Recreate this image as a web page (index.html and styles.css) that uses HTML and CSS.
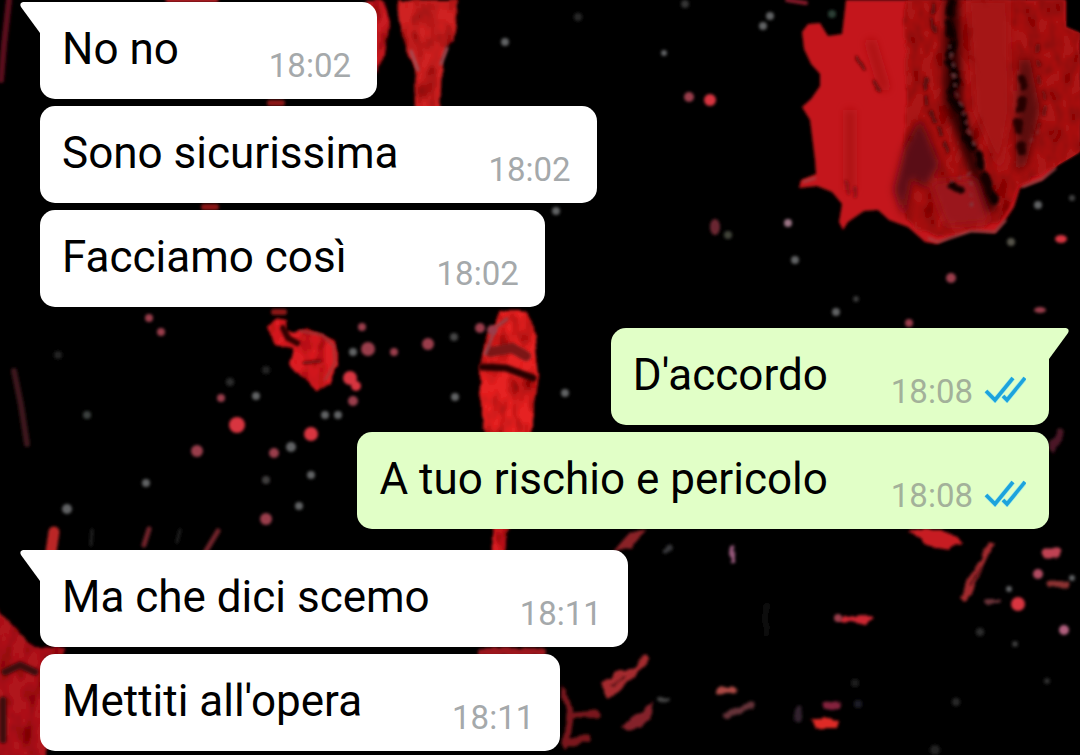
FILE: index.html
```html
<!DOCTYPE html>
<html lang="it">
  <head>
    <meta charset="UTF-8" />
    <meta name="viewport" content="width=device-width, initial-scale=1.0" />
    <title>Chat</title>
    <link rel="stylesheet" href="styles.css">
  </head>
  <body>
    <svg class="wallpaper" viewBox="0 0 1080 755" preserveAspectRatio="xMidYMid slice" aria-hidden="true">
      <defs>
        <filter id="soft" x="-20%" y="-20%" width="140%" height="140%">
          <feGaussianBlur stdDeviation="1.8"/>
        </filter>
        <filter id="smear" x="-40%" y="-20%" width="180%" height="140%">
          <feGaussianBlur stdDeviation="4"/>
        </filter>
        <filter id="streak" x="-10%" y="-10%" width="120%" height="120%">
          <feTurbulence type="fractalNoise" baseFrequency="0.08" numOctaves="2" seed="9" result="noise"/>
          <feDisplacementMap in="SourceGraphic" in2="noise" scale="7" xChannelSelector="R" yChannelSelector="G" result="rough"/>
          <feGaussianBlur in="rough" stdDeviation="1.6"/>
        </filter>
        <filter id="paint" x="-5%" y="-5%" width="110%" height="110%">
          <feTurbulence type="fractalNoise" baseFrequency="0.08 0.04" numOctaves="3" seed="4" result="noise"/>
          <feDisplacementMap in="SourceGraphic" in2="noise" scale="8" xChannelSelector="R" yChannelSelector="G" result="rough"/>
          <feColorMatrix in="noise" type="matrix" values="0 0 0 0 0.15  0 0 0 0 0  0 0 0 0 0  0 1.8 0 0 -0.72" result="dark"/>
          <feComposite in="dark" in2="rough" operator="in" result="grain"/>
          <feMerge result="painted">
            <feMergeNode in="rough"/>
            <feMergeNode in="grain"/>
          </feMerge>
          <feGaussianBlur in="painted" stdDeviation="1.6"/>
        </filter>
        <clipPath id="splashClip">
          <path id="splash" d="M846 0 L842 34 L828 36 L820 23 L808 24 L802 32 L804 49 L811 64 L820 74 L820 86 L811 99 L802 107 L810 120 L815 160 L816 174 L801 180 L799 188 L817 186 L832 192 L842 204 L839 222 L843 230 L848 222 L864 211 L878 210 L889 220 L908 227 L925 242 L937 244 L950 238 L971 231 L995 233 L1004 222 L1014 207 L1020 188 L1042 180 L1058 165 L1080 152 L1080 33 L1066 27 L1066 0 Z"/>
        </clipPath>
      </defs>

      <!-- big splash, top right -->
      <use href="#splash" fill="#c4161a" filter="url(#soft)"/>
      <g clip-path="url(#splashClip)">
        <path d="M905 0 H1066 V28 L1080 34 V152 L1058 164 L1020 186 L1002 222 L937 238 L905 220 Z" fill="#ab1519" filter="url(#paint)"/>
        <g filter="url(#smear)">
          <path d="M946 -10 H959 L961 100 L980 165 L998 210 L984 214 L965 160 L944 100Z" fill="#2a0405"/>
          <path d="M920 118 L940 165 L925 188 L912 177 L904 218 L894 190 L904 150Z" fill="#5a0d16"/>
          <path d="M1019 60 H1030 L1040 110 L1026 165 L1016 172 L1016 120Z" fill="#5b0d0e"/>
          <path d="M930 182 L975 178 L990 222 L946 226Z" fill="#9a181b"/>
          <path d="M968 0 H1008 L1010 110 L1000 170 L975 110Z" fill="#a51418"/>
          <path d="M850 110 V190 M870 40 L885 90" stroke="#a81216" stroke-width="8"/>
        </g>
        <g filter="url(#streak)" fill="none" stroke-linecap="round">
          <path d="M952 2 L948 22 L954 42 L947 60 L957 78 L950 98 L963 113 L966 137 L979 158 L988 184 L994 200" stroke="#090001" stroke-width="8" stroke-dasharray="12 9"/>
          <path d="M932 5 L934 30 M925 80 L927 106 L940 130 L948 153" stroke="#5a0b0d" stroke-width="4" stroke-dasharray="9 8"/>
          <path d="M1021 78 L1025 91 L1018 122 L1022 151" stroke="#250304" stroke-width="8" stroke-dasharray="9 14"/>
          <path d="M1037 45 L1039 75 L1045 105 L1038 130" stroke="#6d0e10" stroke-width="4" stroke-dasharray="5 11"/>
          <path d="M858 57 L864 69 M874 82 L880 92" stroke="#6a0c0e" stroke-width="3"/>
          <path d="M950 45 L955 86 L965 116 L975 145 M1030 140 L1040 133 M950 182 L970 174 L972 205" stroke="#7b4146" stroke-width="2" stroke-dasharray="2 8"/>
          <path d="M983 178 L990 192 M952 185 L960 190" stroke="#130203" stroke-width="8"/>
          <path d="M847 184 V192 M855 188 V196" stroke="#8b1013" stroke-width="4"/>
        </g>
      </g>
      <path d="M928 238 L938 242 L950 238 L971 231 L995 232 L1006 220 M1022 187 L1042 179 L1056 168 M803 182 L816 178" fill="none" stroke="#a0484c" stroke-width="2" filter="url(#soft)"/>

      <!-- drips -->
      <g filter="url(#paint)">
        <path d="M398 0 H458 L454 32 L443 62 L441 112 H415 L414 66 L401 32Z" fill="#cf2024"/>
        <path d="M366 0 H384 L390 22 L385 54 L376 75Z" fill="#c91a20"/>
        <path d="M502 310 H524 L534 328 L539 375 L534 410 L528 440 H486 L482 405 L480 374 L487 335Z" fill="#e62124"/>
        <path d="M493 525 H510 L504 558 H490Z" fill="#d81f24"/>
        <path d="M267 327 L275 318 L287 320 L284 332 L299 330 L317 331 L335 342 L339 362 L330 383 L317 391 L305 381 L289 363 L293 348 L274 345Z" fill="#dc1f22"/>
        <path d="M-8 604 L17 630 L34 647 L66 648 L62 658 H46 V765 H-8Z" fill="#b0171b"/>
      </g>
      <g filter="url(#soft)" fill="none" stroke-linecap="round">
        <path d="M482 367 L506 368 L533 378" stroke="#250506" stroke-width="7"/>
        <path d="M490 352 L512 348 L526 356" stroke="#7c1316" stroke-width="10"/>
        <path d="M485 354 L496 327 L507 319" stroke="#93444b" stroke-width="3"/>
        <path d="M411 51 L418 70 M447 48 L441 64" stroke="#a25159" stroke-width="3"/>
        <path d="M283 328 L288 338 L297 343" stroke="#330505" stroke-width="6"/>
        <path d="M304 363 L320 361" stroke="#6b0d0e" stroke-width="3"/>
        <path d="M300 331 L322 335 L334 346 L335 363 L325 380" stroke="#9b3a39" stroke-width="2"/>
        <path d="M9 0 L4 45 L1 80" stroke="#5c101a" stroke-width="6"/>
        <path d="M14 371 L21 405 L27 444" stroke="#3d131d" stroke-width="6"/>
        <path d="M5 672 L20 665 L35 672 M3 700 V740" stroke="#3d090c" stroke-width="7"/>
        <path d="M54 532 L51 552" stroke="#bb2826" stroke-width="11"/>
        <path d="M149 529 L144 545 M218 531 L206 551" stroke="#71242a" stroke-width="5"/>
        <path d="M180 530 L177 542 M92 530 L91 545" stroke="#202020" stroke-width="3"/>
        <path d="M168 0 H216" stroke="#b51d24" stroke-width="5"/>
        <path d="M270 103 H282 M204 207 H216 M274 312 H284" stroke="#8f1718" stroke-width="6"/>
        <path d="M787 0 L806 3" stroke="#8c1b2b" stroke-width="4"/>
      </g>

      <!-- streaks, lower half -->
      <g filter="url(#streak)" stroke-linecap="round">
        <path d="M908 530 H945 L963 542 L948 550 L926 545Z" fill="#c71d23"/>
        <path d="M614 551 L630 532 L647 528 L632 547Z" fill="#8a2026"/>
        <path d="M603 684 L618 671 L634 667 L646 655 L649 659 L635 676 L614 695 L605 697Z" fill="#a52a2e"/>
        <path d="M612 686 L624 677" stroke="#42090c" stroke-width="2"/>
        <path d="M621 727 L641 712 L654 702 L651 719 L628 732Z" fill="#842029"/>
        <path d="M660 700 L667 698" stroke="#444" stroke-width="4"/>
        <path d="M718 691 L733 690" stroke="#ac4844" stroke-width="7"/>
        <path d="M727 716 L737 711 L751 706" stroke="#653039" stroke-width="7" fill="none"/>
        <path d="M810 720 L825 718 L839 721 L837 729 L820 729Z" fill="#df2a28"/>
        <ellipse cx="832" cy="705" rx="9" ry="5" fill="#84233c"/>
        <path d="M838 617 L862 614 L874 620 L866 625 L844 621Z" fill="#cd2831"/>
        <path d="M988 541 L994 543 L983 566 L973 590 L965 602 L960 598 L968 580 L980 560Z" fill="#a32b2e"/>
        <path d="M980 568 L970 586" stroke="#470b0e" stroke-width="2"/>
        <path d="M1046 553 H1057" stroke="#c04353" stroke-width="9"/>
        <path d="M1051 584 L1066 585" stroke="#8c3030" stroke-width="7"/>
        <path d="M987 601 H998" stroke="#693039" stroke-width="4"/>
        <path d="M733 549 L732 561" stroke="#95587a" stroke-width="5"/>
        <path d="M799 708 L797 720" stroke="#30202d" stroke-width="5"/>
        <path d="M564 690 L570 716 L566 745 M572 742 L588 738 M575 716 L596 714" stroke="#7a191c" stroke-width="7" fill="none"/>
        <path d="M482 652 H542" stroke="#9c171c" stroke-width="8"/>
        <path d="M665 552 L671 547" stroke="#37373b" stroke-width="5"/>
        <path d="M1053 448 L1061 432" stroke="#4c1825" stroke-width="7"/>
        <path d="M766 607 V632" stroke="#0d0d0d" stroke-width="7"/>
      </g>

      <!-- drops -->
      <g filter="url(#soft)" fill="#d83440">
        <circle cx="710" cy="100" r="6"/>
        <circle cx="237" cy="425" r="8"/>
        <circle cx="311" cy="434" r="7"/>
        <circle cx="350" cy="378" r="7"/>
        <circle cx="356" cy="386" r="5"/>
        <ellipse cx="1018" cy="604" rx="7" ry="7"/>
        <ellipse cx="1061" cy="239" rx="6" ry="4"/>
      </g>
      <g filter="url(#soft)" fill="#9a3c4c">
        <circle cx="689" cy="97" r="5"/>
        <ellipse cx="715" cy="227" rx="5" ry="8" fill="#6a2630"/>
        <circle cx="951" cy="278" r="5"/>
        <ellipse cx="1040" cy="310" rx="6" ry="3"/>
        <circle cx="197" cy="451" r="6"/>
        <circle cx="266" cy="519" r="6"/>
        <circle cx="353" cy="401" r="5"/>
        <circle cx="368" cy="349" r="7"/>
        <circle cx="394" cy="352" r="4"/>
        <circle cx="428" cy="344" r="6"/>
        <circle cx="362" cy="327" r="4"/>
        <circle cx="480" cy="328" r="5"/>
        <circle cx="492" cy="330" r="5"/>
        <circle cx="274" cy="453" r="5"/>
        <circle cx="149" cy="318" r="4"/>
        <circle cx="161" cy="332" r="4"/>
        <circle cx="221" cy="398" r="4"/>
        <circle cx="1038" cy="574" r="5" fill="#b04c62"/>
        <circle cx="1064" cy="630" r="5" fill="#b05f7d"/>
        <circle cx="838" cy="618" r="4"/>
        <circle cx="909" cy="323" r="4"/>
      </g>
      <g filter="url(#soft)" fill="#606264">
        <circle cx="770" cy="16" r="4"/>
        <circle cx="763" cy="26" r="4"/>
        <circle cx="832" cy="14" r="4" fill="#293d34"/>
        <circle cx="505" cy="42" r="4"/>
        <circle cx="578" cy="17" r="4" fill="#282828"/>
        <circle cx="685" cy="4" r="4" fill="#353535"/>
        <circle cx="664" cy="53" r="3"/>
        <circle cx="788" cy="223" r="4" fill="#9b7585"/>
        <circle cx="795" cy="260" r="4"/>
        <circle cx="836" cy="312" r="4"/>
        <circle cx="856" cy="299" r="3" fill="#373737"/>
        <circle cx="1038" cy="205" r="4"/>
        <circle cx="1011" cy="242" r="4" fill="#555248"/>
        <circle cx="1072" cy="198" r="3" fill="#404040"/>
        <circle cx="556" cy="211" r="4"/>
        <circle cx="728" cy="235" r="4" fill="#414238"/>
        <circle cx="146" cy="483" r="4"/>
        <circle cx="67" cy="509" r="5"/>
        <circle cx="87" cy="415" r="4" fill="#3b403c"/>
        <circle cx="58" cy="355" r="4" fill="#202020"/>
        <circle cx="256" cy="396" r="4"/>
        <circle cx="230" cy="382" r="4" fill="#2c2c2c"/>
        <circle cx="266" cy="370" r="4" fill="#222"/>
        <circle cx="325" cy="415" r="4"/>
        <circle cx="338" cy="415" r="4"/>
        <circle cx="291" cy="447" r="5"/>
        <circle cx="311" cy="475" r="4"/>
        <circle cx="266" cy="480" r="4" fill="#403c3e"/>
        <circle cx="299" cy="506" r="4"/>
        <circle cx="353" cy="352" r="4"/>
        <circle cx="454" cy="337" r="4" fill="#444"/>
        <circle cx="455" cy="397" r="4"/>
        <circle cx="565" cy="393" r="4"/>
        <circle cx="1009" cy="589" r="3"/>
        <circle cx="1072" cy="578" r="3"/>
        <circle cx="980" cy="632" r="4" fill="#2c2c2c"/>
        <circle cx="1015" cy="644" r="3" fill="#393939"/>
        <circle cx="956" cy="702" r="4" fill="#272727"/>
        <circle cx="1047" cy="681" r="3" fill="#2c2c2c"/>
        <circle cx="935" cy="750" r="5" fill="#202020"/>
        <circle cx="855" cy="683" r="4" fill="#1c1c1c"/>
        <circle cx="858" cy="704" r="4" fill="#1a1a26"/>
      </g>
    </svg>

    <svg width="0" height="0" class="sprite" aria-hidden="true">
      <symbol id="read" viewBox="0 0 42 28">
        <g fill="none" stroke-linejoin="miter">
          <path d="M2 16 L11 25 L29 3 M19 21 L23 25 L41 3" stroke="#a6ebe4" stroke-width="5"/>
          <path d="M2 16 L11 25 L29 3 M19 21 L23 25 L41 3" stroke="#1ca3dc" stroke-width="3.6"/>
        </g>
      </symbol>
    </svg>

    <main class="chat">
      <section class="group received">
        <div class="bubble tail">
          <p class="text">No no</p>
          <div class="meta"><time>18:02</time></div>
        </div>
        <div class="bubble">
          <p class="text">Sono sicurissima</p>
          <div class="meta"><time>18:02</time></div>
        </div>
        <div class="bubble">
          <p class="text">Facciamo così</p>
          <div class="meta"><time>18:02</time></div>
        </div>
      </section>

      <section class="group sent">
        <div class="bubble tail">
          <p class="text">D'accordo</p>
          <div class="meta"><time>18:08</time><svg class="ticks"><use href="#read"/></svg></div>
        </div>
        <div class="bubble">
          <p class="text">A tuo rischio e pericolo</p>
          <div class="meta"><time>18:08</time><svg class="ticks"><use href="#read"/></svg></div>
        </div>
      </section>

      <section class="group received">
        <div class="bubble tail">
          <p class="text">Ma che dici scemo</p>
          <div class="meta"><time>18:11</time></div>
        </div>
        <div class="bubble">
          <p class="text">Mettiti all'opera</p>
          <div class="meta"><time>18:11</time></div>
        </div>
      </section>
    </main>
  </body>
</html>
```
FILE: styles.css
```css
* {
  margin: 0;
  padding: 0;
  box-sizing: border-box;
}

:root {
  --received: #ffffff;
  --sent: #e1ffc7;
  --time: #a5a9ab;
  --tick-gap: 11px;
}

body {
  font-family: Roboto, "Noto Sans", sans-serif;
  background: #000;
  color: #000;
  min-height: 100vh;
}

/* Chat background */
.wallpaper {
  position: fixed;
  inset: 0;
  width: 100%;
  height: 100%;
  z-index: -1;
}

.sprite {
  position: absolute;
}

.chat {
  display: flex;
  flex-direction: column;
  gap: 21px;
  padding: 2px 31px 3px 40px;
}

.group {
  display: flex;
  flex-direction: column;
  align-items: flex-start;
  gap: 7px;
}

.group.sent {
  align-items: flex-end;
}

.bubble {
  display: flex;
  align-items: flex-start;
  gap: 90px;
  padding: 21px 26px 14px 22px;
  border-radius: 15px;
  background: var(--received);
  position: relative;
}

.sent .bubble {
  gap: 63px;
  padding-right: 23px;
  background: var(--sent);
}

.text {
  font-size: 44px;
  line-height: 52px;
}

.meta {
  display: flex;
  align-items: baseline;
  gap: var(--tick-gap);
  margin-top: 23px;
  font-size: 33px;
  line-height: 39px;
  color: var(--time);
}

.sent .meta {
  color: #a3b19a;
}

.ticks {
  width: 42px;
  height: 28px;
}

/* Bubble tails */
.tail::before {
  content: '';
  position: absolute;
  top: 0;
  left: -20px;
  width: 21px;
  height: 32px;
  background: inherit;
  clip-path: path("M3 0 H21 V32 L20 31 L1 5 Q-1 1 3 0 Z");
}

.received .tail {
  border-top-left-radius: 0;
}

.sent .tail {
  border-top-right-radius: 0;
}

.sent .tail::before {
  left: auto;
  right: -20px;
  transform: scaleX(-1);
}
```
